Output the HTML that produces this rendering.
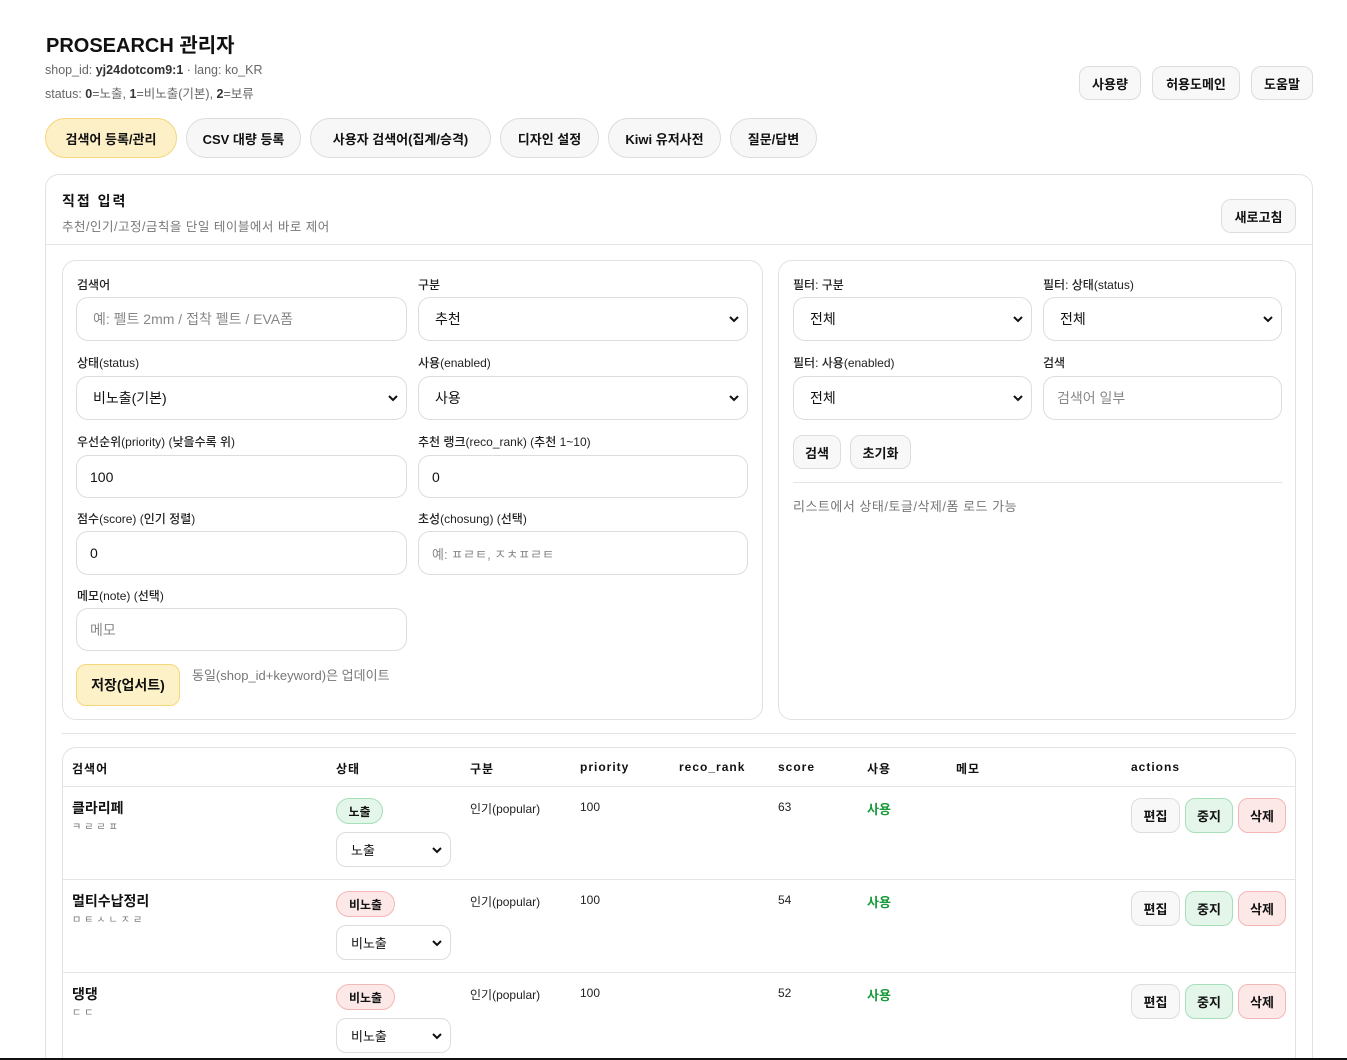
<!DOCTYPE html>
<html style="height:1060px;overflow:hidden"><head><meta charset="utf-8"><style>
*{box-sizing:border-box;margin:0;padding:0}
html,body{width:1347px;height:1060px;overflow:hidden}
body{background:#fff;font-family:"Liberation Sans","Noto Sans CJK KR",sans-serif;color:#111;position:relative}
.a{position:absolute}
.btn{position:absolute;border:1px solid #ddd;background:#f8f8f8;border-radius:10px;font-size:13px;font-weight:bold;display:flex;align-items:center;justify-content:center;color:#111}
.tab{position:absolute;top:118px;height:40px;border:1px solid #ddd;background:#f7f7f7;border-radius:20px;font-size:13px;font-weight:bold;display:flex;align-items:center;justify-content:center}
.card{position:absolute;border:1px solid #e2e2e2;border-radius:14px;background:#fff}
.lbl{position:absolute;font-size:12px;color:#222;font-weight:500}
.in{position:absolute;border:1px solid #ddd;border-radius:12px;height:44px;font-size:14px;display:flex;align-items:center;padding-left:16px;color:#111;background:#fff}
.ph{color:#888}
.chev{position:absolute;right:8px;top:50%;margin-top:-4px}
.hr{position:absolute;height:1px;background:#e4e4e4}
.th{position:absolute;top:760px;font-size:12px;font-weight:bold;letter-spacing:1px}
.td{position:absolute;font-size:12px;color:#222}
.badge{position:absolute;height:26px;border-radius:13px;font-size:12px;font-weight:bold;display:flex;align-items:center;justify-content:center}
.sb{position:absolute;width:115px;height:35px;border:1px solid #ddd;border-radius:10px;font-size:13px;padding-left:14px;display:flex;align-items:center}
</style></head><body>
<div class="a" style="left:46px;top:29px;font-size:20px;font-weight:bold">PROSEARCH 관리자</div>
<div class="a" style="left:45px;top:63px;font-size:12.5px;color:#666">shop_id: <b style="color:#333">yj24dotcom9:1</b> · lang: ko_KR</div>
<div class="a" style="left:45px;top:83px;font-size:12.5px;color:#666">status: <b style="color:#333">0</b>=노출, <b style="color:#333">1</b>=비노출(기본), <b style="color:#333">2</b>=보류</div>
<div class="btn" style="left:1079px;top:66px;width:62px;height:34px">사용량</div>
<div class="btn" style="left:1152px;top:66px;width:88px;height:34px">허용도메인</div>
<div class="btn" style="left:1251px;top:66px;width:62px;height:34px">도움말</div>

<div class="tab" style="left:45px;width:132px;background:#fdf0c6;border-color:#f5d67a">검색어 등록/관리</div>
<div class="tab" style="left:186px;width:115px">CSV 대량 등록</div>
<div class="tab" style="left:310px;width:181px">사용자 검색어(집계/승격)</div>
<div class="tab" style="left:500px;width:99px">디자인 설정</div>
<div class="tab" style="left:608px;width:113px">Kiwi 유저사전</div>
<div class="tab" style="left:730px;width:87px">질문/답변</div>

<div class="card" style="left:45px;top:174px;width:1268px;height:900px"></div>
<div class="a" style="left:62px;top:191px;font-size:14px;font-weight:bold;letter-spacing:2px">직접 입력</div>
<div class="a" style="left:62px;top:216px;font-size:12.5px;color:#777;letter-spacing:.5px">추천/인기/고정/금칙을 단일 테이블에서 바로 제어</div>
<div class="btn" style="left:1221px;top:199px;width:75px;height:34px">새로고침</div>
<div class="hr" style="left:46px;top:244px;width:1266px"></div>

<div class="card" style="left:62px;top:260px;width:701px;height:460px"></div>
<div class="card" style="left:778px;top:260px;width:518px;height:460px"></div>

<div class="lbl" style="left:77px;top:276px">검색어</div>
<div class="in" style="left:76px;top:297px;width:331px"><span class="ph">예: 펠트 2mm / 접착 펠트 / EVA폼</span></div>
<div class="lbl" style="left:418px;top:276px">구분</div>
<div class="in" style="left:418px;top:297px;width:330px">추천<svg class="chev" width="10" height="8" viewBox="0 0 10 8"><path d="M1 2l4 4 4-4" stroke="#111" stroke-width="2" fill="none"/></svg></div>
<div class="lbl" style="left:77px;top:354px">상태(status)</div>
<div class="in" style="left:76px;top:376px;width:331px">비노출(기본)<svg class="chev" width="10" height="8" viewBox="0 0 10 8"><path d="M1 2l4 4 4-4" stroke="#111" stroke-width="2" fill="none"/></svg></div>
<div class="lbl" style="left:418px;top:354px">사용(enabled)</div>
<div class="in" style="left:418px;top:376px;width:330px">사용<svg class="chev" width="10" height="8" viewBox="0 0 10 8"><path d="M1 2l4 4 4-4" stroke="#111" stroke-width="2" fill="none"/></svg></div>
<div class="lbl" style="left:77px;top:433px">우선순위(priority) (낮을수록 위)</div>
<div class="in" style="left:76px;top:455px;width:331px;height:43px;padding-left:13px">100</div>
<div class="lbl" style="left:418px;top:433px">추천 랭크(reco_rank) (추천 1~10)</div>
<div class="in" style="left:418px;top:455px;width:330px;height:43px;padding-left:13px">0</div>
<div class="lbl" style="left:77px;top:510px">점수(score) (인기 정렬)</div>
<div class="in" style="left:76px;top:531px;width:331px;padding-left:13px">0</div>
<div class="lbl" style="left:418px;top:510px">초성(chosung) (선택)</div>
<div class="in" style="left:418px;top:531px;width:330px;padding-left:13px"><span class="ph" style="font-size:13px">예: ㅍㄹㅌ, ㅈㅊㅍㄹㅌ</span></div>
<div class="lbl" style="left:77px;top:587px">메모(note) (선택)</div>
<div class="in" style="left:76px;top:608px;width:331px;height:43px;padding-left:13px"><span class="ph">메모</span></div>
<div class="btn" style="left:76px;top:664px;width:104px;height:42px;background:#fdf1c8;border-color:#f5d67a;font-size:14px">저장(업서트)</div>
<div class="a" style="left:192px;top:665px;font-size:13px;color:#777">동일(shop_id+keyword)은 업데이트</div>

<div class="lbl" style="left:793px;top:276px">필터: 구분</div>
<div class="in" style="left:793px;top:297px;width:239px">전체<svg class="chev" width="10" height="8" viewBox="0 0 10 8"><path d="M1 2l4 4 4-4" stroke="#111" stroke-width="2" fill="none"/></svg></div>
<div class="lbl" style="left:1043px;top:276px">필터: 상태(status)</div>
<div class="in" style="left:1043px;top:297px;width:239px">전체<svg class="chev" width="10" height="8" viewBox="0 0 10 8"><path d="M1 2l4 4 4-4" stroke="#111" stroke-width="2" fill="none"/></svg></div>
<div class="lbl" style="left:793px;top:354px">필터: 사용(enabled)</div>
<div class="in" style="left:793px;top:376px;width:239px">전체<svg class="chev" width="10" height="8" viewBox="0 0 10 8"><path d="M1 2l4 4 4-4" stroke="#111" stroke-width="2" fill="none"/></svg></div>
<div class="lbl" style="left:1043px;top:354px">검색</div>
<div class="in" style="left:1043px;top:376px;width:239px;padding-left:13px"><span class="ph">검색어 일부</span></div>
<div class="btn" style="left:793px;top:435px;width:48px;height:34px">검색</div>
<div class="btn" style="left:850px;top:435px;width:61px;height:34px">초기화</div>
<div class="hr" style="left:793px;top:482px;width:489px"></div>
<div class="a" style="left:793px;top:496px;font-size:13px;color:#777;letter-spacing:.5px">리스트에서 상태/토글/삭제/폼 로드 가능</div>

<div class="hr" style="left:62px;top:733px;width:1234px"></div>
<div class="card" style="left:62px;top:747px;width:1234px;height:330px"></div>
<div class="th" style="left:72px">검색어</div>
<div class="th" style="left:336px">상태</div>
<div class="th" style="left:470px">구분</div>
<div class="th" style="left:580px">priority</div>
<div class="th" style="left:679px">reco_rank</div>
<div class="th" style="left:778px">score</div>
<div class="th" style="left:867px">사용</div>
<div class="th" style="left:956px">메모</div>
<div class="th" style="left:1131px">actions</div>
<div class="hr" style="left:63px;top:786px;width:1232px"></div>
<div class="hr" style="left:63px;top:879px;width:1232px"></div>
<div class="hr" style="left:63px;top:972px;width:1232px"></div>

<div class="a" style="left:72px;top:798px;font-size:14px;font-weight:bold">클라리페</div>
<div class="a" style="left:72px;top:818px;font-size:10px;color:#777;letter-spacing:3px">ㅋㄹㄹㅍ</div>
<div class="badge" style="left:336px;top:798px;width:47px;background:#e4f5ea;border:1px solid #a8dfbb">노출</div>
<div class="sb" style="left:336px;top:832px">노출<svg class="chev" width="10" height="8" viewBox="0 0 10 8"><path d="M1 2l4 4 4-4" stroke="#111" stroke-width="2" fill="none"/></svg></div>
<div class="td" style="left:470px;top:800px">인기(popular)</div>
<div class="td" style="left:580px;top:800px">100</div>
<div class="td" style="left:778px;top:800px">63</div>
<div class="td" style="left:867px;top:799px;color:#1a9a3c;font-weight:bold;font-size:13px">사용</div>

<div class="a" style="left:72px;top:891px;font-size:14px;font-weight:bold">멀티수납정리</div>
<div class="a" style="left:72px;top:911px;font-size:10px;color:#777;letter-spacing:3px">ㅁㅌㅅㄴㅈㄹ</div>
<div class="badge" style="left:336px;top:891px;width:59px;background:#fde8e8;border:1px solid #f3b7b7">비노출</div>
<div class="sb" style="left:336px;top:925px">비노출<svg class="chev" width="10" height="8" viewBox="0 0 10 8"><path d="M1 2l4 4 4-4" stroke="#111" stroke-width="2" fill="none"/></svg></div>
<div class="td" style="left:470px;top:893px">인기(popular)</div>
<div class="td" style="left:580px;top:893px">100</div>
<div class="td" style="left:778px;top:893px">54</div>
<div class="td" style="left:867px;top:892px;color:#1a9a3c;font-weight:bold;font-size:13px">사용</div>

<div class="a" style="left:72px;top:984px;font-size:14px;font-weight:bold">댕댕</div>
<div class="a" style="left:72px;top:1004px;font-size:10px;color:#777;letter-spacing:3px">ㄷㄷ</div>
<div class="badge" style="left:336px;top:984px;width:59px;background:#fde8e8;border:1px solid #f3b7b7">비노출</div>
<div class="sb" style="left:336px;top:1018px">비노출<svg class="chev" width="10" height="8" viewBox="0 0 10 8"><path d="M1 2l4 4 4-4" stroke="#111" stroke-width="2" fill="none"/></svg></div>
<div class="td" style="left:470px;top:986px">인기(popular)</div>
<div class="td" style="left:580px;top:986px">100</div>
<div class="td" style="left:778px;top:986px">52</div>
<div class="td" style="left:867px;top:985px;color:#1a9a3c;font-weight:bold;font-size:13px">사용</div>

<div class="btn" style="left:1131px;top:798px;width:49px;height:35px">편집</div>
<div class="btn" style="left:1185px;top:798px;width:48px;height:35px;background:#e4f5ea;border-color:#a8dfbb">중지</div>
<div class="btn" style="left:1238px;top:798px;width:48px;height:35px;background:#fde8e8;border-color:#f3b7b7">삭제</div>
<div class="btn" style="left:1131px;top:891px;width:49px;height:35px">편집</div>
<div class="btn" style="left:1185px;top:891px;width:48px;height:35px;background:#e4f5ea;border-color:#a8dfbb">중지</div>
<div class="btn" style="left:1238px;top:891px;width:48px;height:35px;background:#fde8e8;border-color:#f3b7b7">삭제</div>
<div class="btn" style="left:1131px;top:984px;width:49px;height:35px">편집</div>
<div class="btn" style="left:1185px;top:984px;width:48px;height:35px;background:#e4f5ea;border-color:#a8dfbb">중지</div>
<div class="btn" style="left:1238px;top:984px;width:48px;height:35px;background:#fde8e8;border-color:#f3b7b7">삭제</div>

<div class="a" style="left:0;top:1058px;width:1347px;height:2px;background:#111"></div>
</body></html>
